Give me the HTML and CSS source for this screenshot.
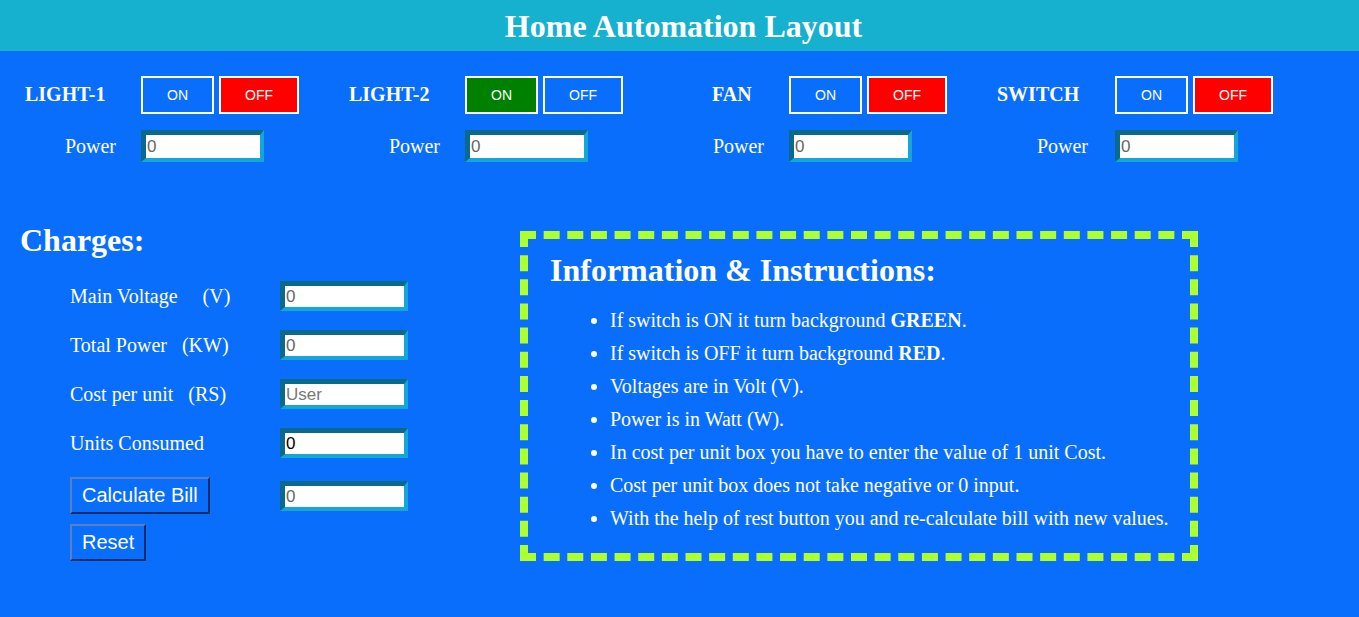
FILE: index.html
```html
<!DOCTYPE html>
<html lang="en">
<head>
<meta charset="utf-8">
<title>Home Automation Layout</title>
<link rel="stylesheet" href="styles.css">
</head>
<body>
<header class="topbar">
  <h1 class="title">Home Automation Layout</h1>
</header>

<section class="devices">
  <div class="device">
    <span class="dev-name">LIGHT-1</span>
    <div class="toggles">
      <button class="tg">ON</button>
      <button class="tg tg-off">OFF</button>
    </div>
    <span class="power-label">Power</span>
    <input class="field dev-field" type="text" value="0">
  </div>
  <div class="device">
    <span class="dev-name">LIGHT-2</span>
    <div class="toggles">
      <button class="tg tg-on">ON</button>
      <button class="tg">OFF</button>
    </div>
    <span class="power-label">Power</span>
    <input class="field dev-field" type="text" value="0">
  </div>
  <div class="device device-fan">
    <span class="dev-name">FAN</span>
    <div class="toggles">
      <button class="tg">ON</button>
      <button class="tg tg-off">OFF</button>
    </div>
    <span class="power-label">Power</span>
    <input class="field dev-field" type="text" value="0">
  </div>
  <div class="device device-switch">
    <span class="dev-name">SWITCH</span>
    <div class="toggles">
      <button class="tg">ON</button>
      <button class="tg tg-off">OFF</button>
    </div>
    <span class="power-label">Power</span>
    <input class="field dev-field" type="text" value="0">
  </div>
</section>

<main class="lower">
  <section class="charges">
    <h2 class="section-title charges-title">Charges:</h2>
    <div class="form-grid">
      <label class="f-label">Main Voltage&nbsp;&nbsp;&nbsp;&nbsp;&nbsp;(V)</label>
      <input class="field ch-field" type="text" value="0">
      <label class="f-label">Total Power&nbsp;&nbsp;&nbsp;(KW)</label>
      <input class="field ch-field" type="text" value="0">
      <label class="f-label">Cost per unit&nbsp;&nbsp;&nbsp;(RS)</label>
      <input class="field ch-field" type="text" placeholder="User">
      <label class="f-label">Units Consumed</label>
      <input class="field ch-field dark" type="text" value="0">
      <div class="actions">
        <button class="act">Calculate Bill</button>
        <button class="act">Reset</button>
      </div>
      <input class="field ch-field bill" type="text" value="0">
    </div>
  </section>

  <section class="info">
    <h2 class="section-title">Information &amp; Instructions:</h2>
    <ul class="info-list">
      <li>If switch is ON it turn background <b>GREEN</b>.</li>
      <li>If switch is OFF it turn background <b>RED</b>.</li>
      <li>Voltages are in Volt (V).</li>
      <li>Power is in Watt (W).</li>
      <li>In cost per unit box you have to enter the value of 1 unit Cost.</li>
      <li>Cost per unit box does not take negative or 0 input.</li>
      <li>With the help of rest button you and re-calculate bill with new values.</li>
    </ul>
  </section>
</main>
</body>
</html>
```

FILE: styles.css
```css
* { box-sizing: border-box; }

body {
  margin: 0;
  background: #0a6efd;
  color: #ffffff;
  font-family: "Liberation Serif", "Times New Roman", serif;
  height: 617px;
  overflow: hidden;
}

.topbar {
  height: 51px;
  background: #15b1cf;
  display: flex;
  align-items: center;
  justify-content: center;
  padding-left: 8px;
}

.title {
  margin: 0;
  font-size: 32px;
  font-weight: bold;
  line-height: 1;
}

.devices {
  display: grid;
  grid-template-columns: 324px 324px 324px 326px;
  padding-top: 25px;
}

.device {
  display: grid;
  grid-template-columns: 141px auto;
  grid-template-rows: 38px 32px;
  row-gap: 16px;
  align-items: center;
}

.device-switch { grid-template-columns: 143px auto; }

.dev-name {
  font-weight: bold;
  font-size: 20px;
  padding-left: 25px;
  margin-top: -2px;
}

.device-fan .dev-name { padding-left: 64px; }

.toggles {
  display: flex;
  gap: 5px;
  height: 38px;
}

.tg {
  width: 73px;
  height: 38px;
  border: 2px solid #ffffff;
  background: transparent;
  color: #ffffff;
  font-family: "Liberation Sans", Arial, sans-serif;
  font-size: 14px;
  padding: 0;
}

.tg + .tg { width: 80px; }
.tg-off { background: #ff0000; }
.tg-on { background: #008000; }

.power-label {
  font-size: 20px;
  justify-self: end;
  padding-right: 25px;
}

.device-switch .power-label { padding-right: 27px; }

.field {
  border-style: solid;
  border-width: 5px 4px 4px 5px;
  border-color: #0b6a8c #15a6d8 #15a6d8 #0b6a8c;
  background: #ffffff;
  font-family: "Liberation Sans", Arial, sans-serif;
  font-size: 17px;
  color: #666666;
  padding: 0 1px;
  outline: none;
}

.field::placeholder { color: #777777; }

.dev-field {
  width: 123px;
  height: 32px;
}

.lower {
  display: flex;
  margin-top: 69px;
}

.charges {
  width: 520px;
  padding-left: 20px;
}

.section-title {
  margin: 0;
  font-size: 32px;
  font-weight: bold;
  line-height: 32px;
}

.charges-title { margin-top: -7px; }

.form-grid {
  display: grid;
  grid-template-columns: 210px 128px;
  margin-top: 25px;
  margin-left: 50px;
  row-gap: 19px;
  align-items: center;
}

.f-label {
  font-size: 20px;
}

.ch-field {
  width: 128px;
  height: 30px;
}

.ch-field.dark { color: #000000; }

.actions {
  display: flex;
  flex-direction: column;
  align-items: flex-start;
  gap: 10px;
  align-self: start;
}

.bill { align-self: start; margin-top: 4px; }

.act {
  height: 37px;
  padding: 0 10px;
  background: #0a6efd;
  color: #ffffff;
  font-family: "Liberation Sans", Arial, sans-serif;
  font-size: 20px;
  border-style: solid;
  border-width: 2px;
  border-color: #5a7fc2 #082c66 #082c66 #5a7fc2;
}

.info {
  width: 678px;
  height: 330px;
  border: 8px dashed #adff2f;
  padding: 15px 8px 18px 22px;
}

.info-list {
  margin: 18px 0 0 0;
  padding-left: 60px;
  font-size: 20px;
}

.info-list li {
  line-height: 33px;
  white-space: nowrap;
}
```
